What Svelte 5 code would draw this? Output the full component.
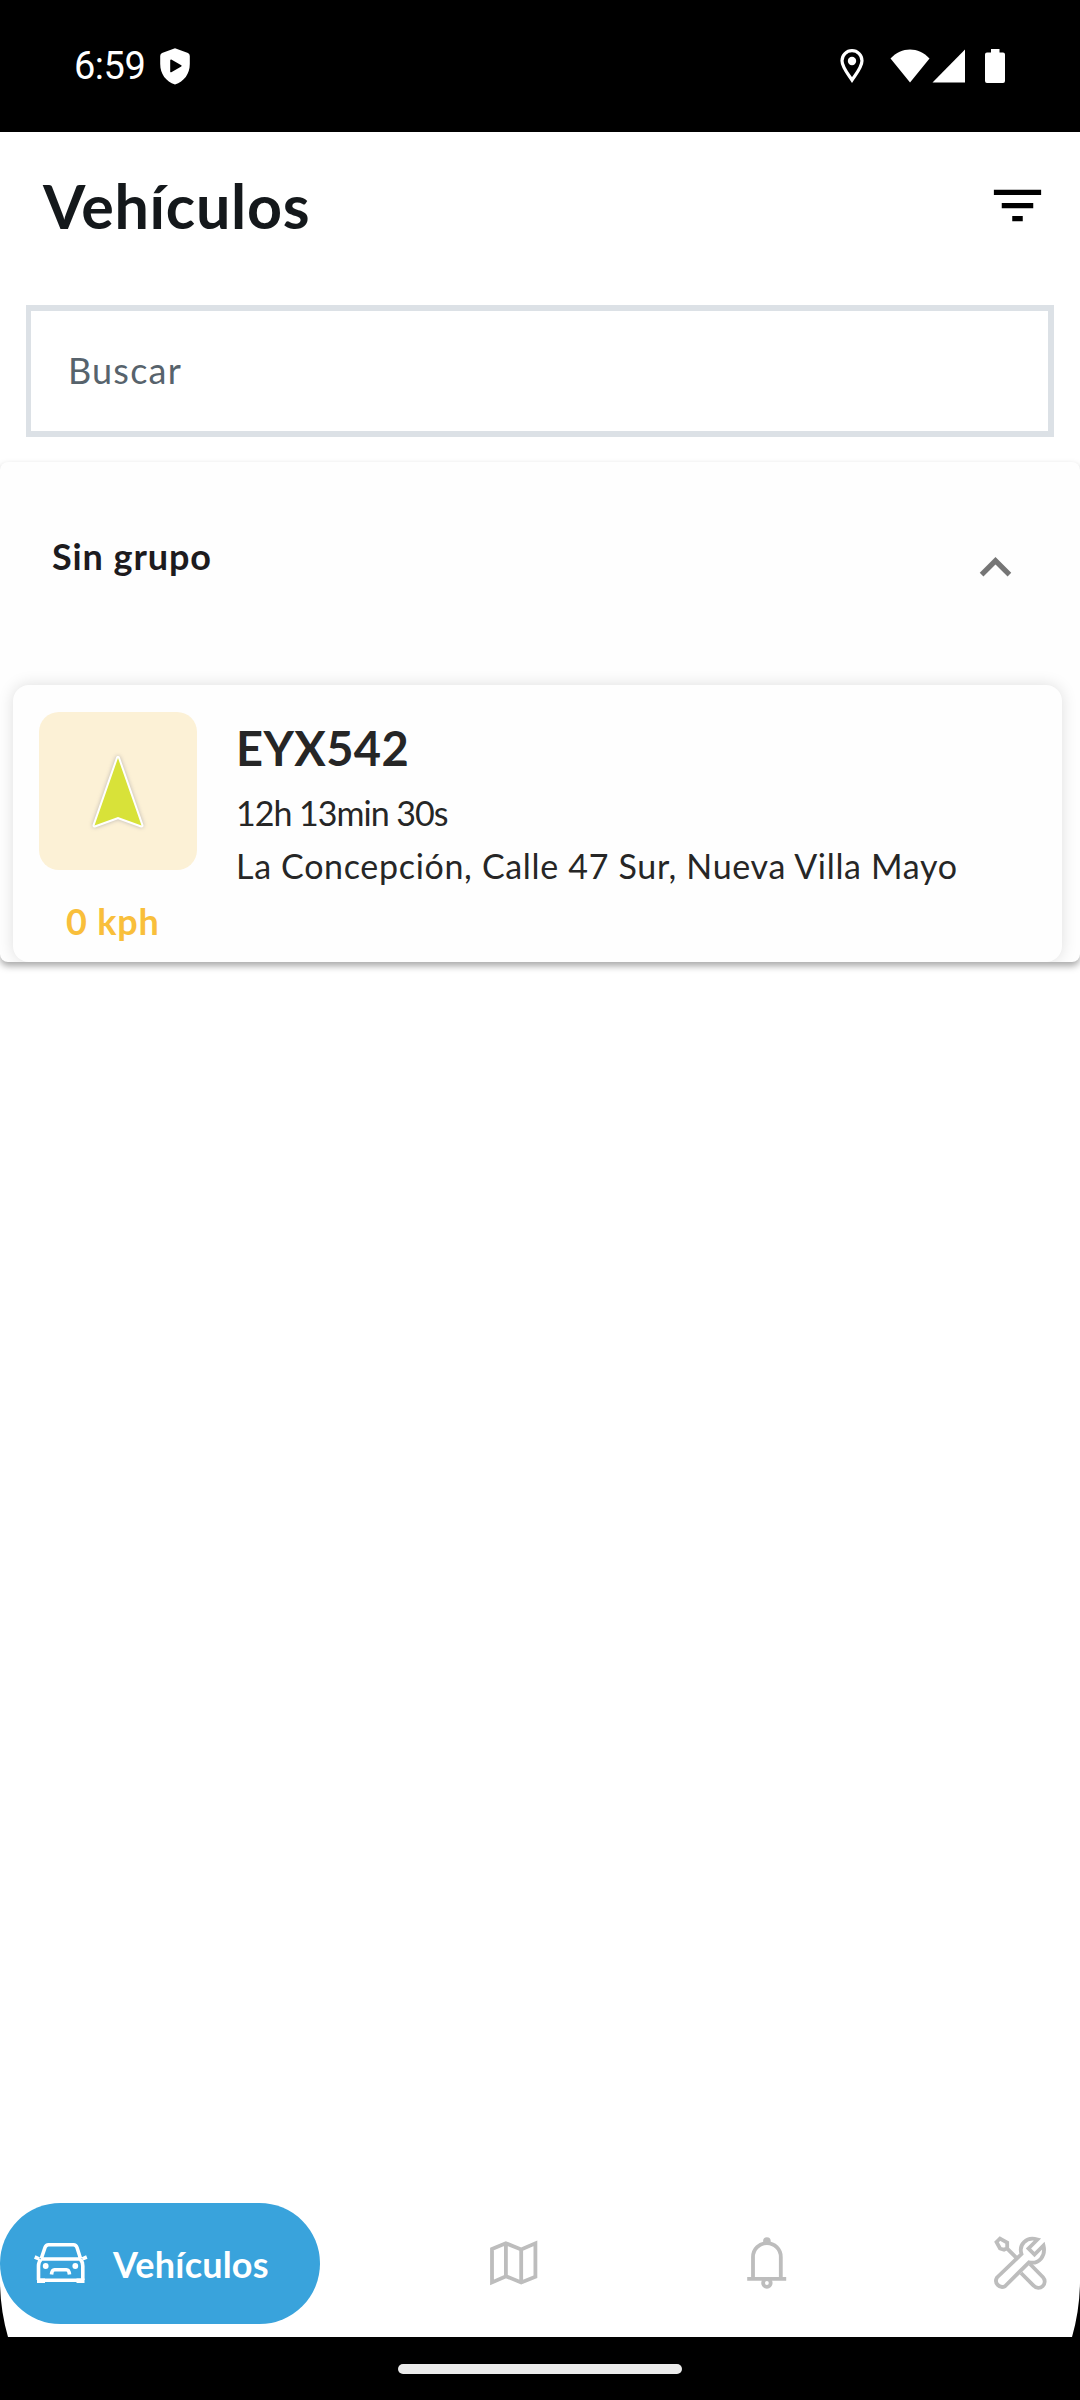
<script>
  const vehicles = [
    {
      plate: 'EYX542',
      duration: '12h 13min 30s',
      address: 'La Concepción, Calle 47 Sur, Nueva Villa Mayo',
      speed: '0 kph',
    },
  ];

  let search = $state('');
  let expanded = $state(true);
</script>

<div class="screen">
  <div class="status-bar">
    <span class="clock">6:59</span>
    <svg class="shield" width="30" height="37" viewBox="0 0 30 37">
      <path fill="#fff" fill-rule="evenodd" d="M15 .3 28 5Q29.800 5.800 29.800 8V16C29.800 26 24 33.500 15 36.500 6 33.500.2 26 .2 16V8Q.2 5.800 2 5ZM10.200 12.200V23.800Q10.500 24.600 11.300 24.200L21.300 18.500Q22 17.800 21.300 17.300L11.300 11.500Q10.400 11.300 10.200 12.200Z" />
    </svg>
    <div class="status-icons">
      <svg class="pin" width="24" height="34" viewBox="0 0 24 34">
        <path fill="none" stroke="#fff" stroke-width="3.200" d="M12 31C8 25 2 18 2 11.700a10 10 0 0 1 20 0C22 18 16 25 12 31Z" />
        <circle cx="12" cy="12" r="4.200" fill="#fff" />
      </svg>
      <svg class="wifi" width="40" height="34" viewBox="0 0 40 34">
        <path fill="#fff" d="M20 33.500.5 9.500C6 3.500 13 .5 20 .5s14 3 19.500 9Z" />
      </svg>
      <svg class="signal" width="34" height="34" viewBox="0 0 34 34">
        <path fill="#fff" d="M.5 33.500 33 .5v33Z" />
      </svg>
      <svg width="20" height="34" viewBox="0 0 20 34">
        <path fill="#fff" d="M6 0h8.500v3.500H18a2 2 0 0 1 2 2V32a2 2 0 0 1-2 2H2a2 2 0 0 1-2-2V5.500a2 2 0 0 1 2-2h4Z" />
      </svg>
    </div>
  </div>

  <main>
    <header>
      <h1>Vehículos</h1>
      <svg width="63" height="63" viewBox="0 0 24 24">
        <path d="M10 18h4v-2h-4v2zM3 6v2h18V6H3zm3 7h12v-2H6v2z" />
      </svg>
    </header>

    <input class="search" placeholder="Buscar" bind:value={search} />

    <section class="group">
      <button class="group-header" onclick={() => (expanded = !expanded)}>
        <span>Sin grupo</span>
        <svg class:closed={!expanded} width="63" height="63" viewBox="0 0 24 24">
          <path fill="#757575" d="M12 8l-6 6 1.410 1.410L12 10.830l4.590 4.580L18 14z" />
        </svg>
      </button>

      {#if expanded}
        {#each vehicles as v}
          <article class="card">
            <div class="marker">
              <div class="tile">
                <svg width="66" height="90" viewBox="0 0 66 90">
                  <path class="arrow" d="M33 12 56.500 79.500 33 71 9.500 79.500Z" />
                </svg>
              </div>
              <span class="speed">{v.speed}</span>
            </div>
            <div class="info">
              <h2>{v.plate}</h2>
              <p class="duration">{v.duration}</p>
              <p class="address">{v.address}</p>
            </div>
          </article>
        {/each}
      {/if}
    </section>

    <nav>
      <svg class="corner left" width="8" height="54" viewBox="0 0 8 54"><path d="M0 0Q.5 28 8 54H0Z" /></svg>
      <svg class="corner right" width="8" height="54" viewBox="0 0 8 54"><path d="M8 0Q7.500 28 0 54H8Z" /></svg>
      <a class="tab active" href="#vehiculos">
        <svg width="63" height="63" viewBox="0 0 63 63" fill="none" stroke="#fff" stroke-width="3.600">
          <path d="M12.300 26.500 16 15.500Q17 12.700 19.500 12.700H44.500Q47 12.700 48 15.500L51.500 26.500M5.700 25 10 26.800M57.800 25 53.500 26.800M12 27H52M12 27.500Q9.500 30 9.500 34V48M53.800 48V34Q53.800 30 51.500 27.500M9.500 48.200H54" />
          <path d="M22.500 42.500Q23 37.700 25.500 37.700H37.500Q40 37.700 40.500 42.500" />
          <path stroke-width="4.500" d="M8 48.700H16M47.500 48.700H55.500" />
          <circle cx="16.700" cy="34" r="2.900" fill="#fff" stroke="none" />
          <circle cx="46.300" cy="34" r="2.900" fill="#fff" stroke="none" />
        </svg>
        <span>Vehículos</span>
      </a>
      <a class="tab" href="#mapa" aria-label="Mapa">
        <svg width="63" height="63" viewBox="0 0 63 63" fill="none" stroke="#bdbdbd" stroke-width="3.800">
          <path d="M10 17 23.800 11.200 39.200 17.500 53.400 11.300V44.700L39.200 50.400 24 44.200 10 50.400ZM23.900 11.200V44.200M39.200 17.500V50.400" />
        </svg>
      </a>
      <a class="tab" href="#alertas" aria-label="Alertas">
        <svg width="63" height="63" viewBox="0 0 63 63" fill="none" stroke="#bdbdbd" stroke-width="3.800">
          <path d="M18 46V25a13.900 13.900 0 0 1 27.800 0V46M12.200 46.800H51.200" />
          <circle cx="31.900" cy="9" r="3.800" fill="#bdbdbd" stroke="none" />
          <circle cx="31.900" cy="51" r="3.800" />
        </svg>
      </a>
      <a class="tab" href="#taller" aria-label="Taller">
        <svg width="63" height="63" viewBox="0 0 63 63" fill="none" stroke="#bdbdbd" stroke-width="3.800">
          <path d="M8 45.500 32.500 22C29.500 13 37 4 48.500 7.500L39.500 16.500 45.500 22.500 54.500 13.500C57 24 50 32.500 40 30.300L16 54.300A6.200 6.200 0 0 1 8 45.500Z" />
          <path d="M7.500 10 11 6.500 18.200 10.500V16.300L15 17.700 11 16.500ZM18 16.300 27.500 25.800M32 41 44.800 53.800A6.200 6.200 0 0 0 54 45.200L41 32" />
        </svg>
      </a>
    </nav>
  </main>

  <div class="gesture-bar"><span></span></div>
</div>

<style>
  :global(body) {
    background: #000;
  }

  .screen {
    display: flex;
    flex-direction: column;
    width: 1080px;
    height: 2400px;
    overflow: hidden;
    background: #000;
    font-family: Lato, sans-serif;
  }

  .status-bar {
    display: flex;
    align-items: center;
    height: 132px;
    padding: 0 75px 0 74px;
    box-sizing: border-box;
  }

  .clock {
    width: 86px;
    color: #fff;
    font-family: Roboto, sans-serif;
    font-size: 38px;
    letter-spacing: -0.5px;
  }

  .status-icons {
    display: flex;
    align-items: center;
    margin-left: auto;
  }

  .pin {
    margin-right: 26px;
  }

  .wifi {
    margin-right: 2px;
  }

  .signal {
    margin-right: 19px;
  }

  main {
    flex: 1;
    display: flex;
    flex-direction: column;
    background: #fff;
  }

  header {
    display: flex;
    align-items: center;
    justify-content: space-between;
    height: 147px;
    padding: 0 31px 0 43px;
  }

  h1 {
    margin: 0;
    color: #14181b;
    font-size: 61px;
    font-weight: 700;
    letter-spacing: 0.7px;
  }

  .search {
    height: 132px;
    margin: 26px 26px 0;
    padding: 0 38px 2px 37px;
    box-sizing: border-box;
    border: 6px solid #dce1e6;
    border-left-width: 5px;
    border-radius: 0;
    background: #fff;
    font: 36px Lato, sans-serif;
    letter-spacing: 1.2px;
    outline: none;
  }

  .search::placeholder {
    color: #57636c;
    opacity: 1;
  }

  .group {
    margin-top: 25px;
    overflow: hidden;
    border-radius: 8px;
    background: #fefefe;
    box-shadow: 0 4px 7px rgba(0, 0, 0, 0.34);
  }

  .group-header {
    display: flex;
    align-items: flex-start;
    justify-content: space-between;
    width: 100%;
    height: 223px;
    padding: 72px 53px 0 52px;
    border: 0;
    background: none;
    color: #1d1b1e;
    font: 700 36px/44px Lato, sans-serif;
    letter-spacing: 0.9px;
  }

  .group-header svg {
    margin-top: 2px;
  }

  .closed {
    transform: rotate(180deg);
  }

  .card {
    display: flex;
    gap: 39px;
    height: 277px;
    margin: 0 18px 0 13px;
    padding: 27px 26px 0;
    box-sizing: border-box;
    border-radius: 16px;
    background: #fefefe;
    box-shadow: 0 0 16px rgba(0, 0, 0, 0.13);
  }

  .marker {
    display: flex;
    flex-direction: column;
    gap: 29px;
    width: 158px;
  }

  .tile {
    display: flex;
    align-items: center;
    justify-content: center;
    height: 158px;
    border-radius: 20px;
    background: #fcf1d6;
  }

  .arrow {
    fill: #d8e239;
    stroke: #fff;
    stroke-width: 4px;
    stroke-linejoin: round;
    paint-order: stroke;
    filter: drop-shadow(0 0 2px rgba(90, 90, 120, 0.4));
  }

  .speed {
    padding-left: 27px;
    color: #f9bf3b;
    font-size: 36px;
    font-weight: 700;
    line-height: 44px;
    letter-spacing: 0.8px;
    white-space: nowrap;
  }

  .info {
    color: #262626;
    white-space: nowrap;
  }

  h2 {
    margin: 8px 0 10px;
    font-size: 47px;
    font-weight: 700;
    line-height: 56px;
    letter-spacing: 0.4px;
  }

  p {
    margin: 0;
    font-size: 34px;
    line-height: 53px;
  }

  .duration {
    letter-spacing: -1px;
  }

  .address {
    letter-spacing: 0.68px;
  }

  nav {
    position: relative;
    display: flex;
    align-items: center;
    gap: 190.5px;
    margin-top: auto;
    padding: 0 28px 13px 0;
  }

  .tab {
    display: flex;
    height: 63px;
    text-decoration: none;
  }

  .tab.active {
    align-items: center;
    gap: 21px;
    width: 320px;
    height: 121px;
    margin-right: -29px;
    padding-left: 29px;
    box-sizing: border-box;
    border-radius: 61px;
    background: #39a3dc;
    color: #fff;
    font-size: 36px;
    font-weight: 700;
    letter-spacing: 0.2px;
  }

  .corner {
    position: absolute;
    bottom: 0;
  }

  .left {
    left: 0;
  }

  .right {
    right: 0;
  }

  .gesture-bar {
    display: flex;
    justify-content: center;
    height: 63px;
  }

  .gesture-bar span {
    width: 284px;
    height: 10px;
    margin-top: 27px;
    border-radius: 5px;
    background: #ebebeb;
  }
</style>
